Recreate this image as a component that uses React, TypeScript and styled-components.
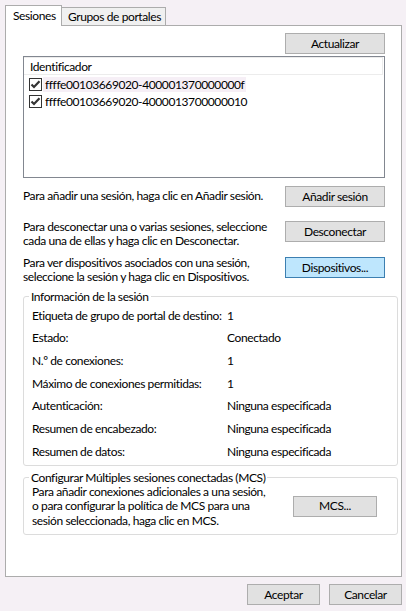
import React from "react";
import styled, { createGlobalStyle } from "styled-components";

const Global = createGlobalStyle`
  html, body { margin: 0; padding: 0; background: #f5f0f5; }
  body {
    font-family: Lato, "Liberation Sans", sans-serif;
    font-size: 12px;
    letter-spacing: -0.4px;
    color: #000;
  }
  #root { width: 406px; height: 611px; }
`;

const Dialog = styled.div`
  width: 406px;
  height: 611px;
  box-sizing: border-box;
  padding-top: 5px;
  display: flex;
  flex-direction: column;
`;

const TabStrip = styled.div`
  display: flex;
  align-items: flex-end;
  height: 20px;
  padding-left: 5px;
`;

const Tab = styled.div<{ $active?: boolean; $w: number }>`
  box-sizing: border-box;
  width: ${(p) => p.$w}px;
  height: ${(p) => (p.$active ? "21px" : "18px")};
  margin-bottom: ${(p) => (p.$active ? "-1px" : "0")};
  border: 1px solid #acacac;
  border-bottom: none;
  border-left: ${(p) => (p.$active ? "1px solid #acacac" : "none")};
  background: ${(p) => (p.$active ? "#ffffff" : "#f0f0f0")};
  position: ${(p) => (p.$active ? "relative" : "static")};
  z-index: ${(p) => (p.$active ? 1 : "auto")};
  padding: ${(p) => (p.$active ? "0 0 2px 7px" : "0 0 0 6px")};
  display: flex;
  align-items: center;
  white-space: nowrap;
`;

const Panel = styled.div`
  box-sizing: border-box;
  margin-left: 5px;
  width: 397px;
  height: 552px;
  background: #ffffff;
  border: 1px solid #acacac;
  padding: 7px 0 0 17px;
  display: flex;
  flex-direction: column;
  align-items: flex-start;
`;

const TopBar = styled.div`
  width: 362px;
  display: flex;
  justify-content: flex-end;
`;

const Button = styled.button<{ $w: number; $hot?: boolean; $mt?: number }>`
  box-sizing: border-box;
  flex: none;
  width: ${(p) => p.$w}px;
  height: 21px;
  margin: ${(p) => p.$mt ?? 0}px 0 0 0;
  padding: 0 0 1px 0;
  border: 1px solid ${(p) => (p.$hot ? "#3c7fb1" : "#adadad")};
  background: ${(p) => (p.$hot ? "#bee6fd" : "#e1e1e1")};
  font: inherit;
  letter-spacing: inherit;
  color: #000;
  display: flex;
  align-items: center;
  justify-content: center;
  white-space: nowrap;
`;

const ListBox = styled.div`
  box-sizing: border-box;
  width: 362px;
  height: 122px;
  margin-top: 2px;
  border: 1px solid #828790;
  background: #fff;
  display: flex;
  flex-direction: column;
`;

const ListHeader = styled.div`
  box-sizing: border-box;
  height: 18px;
  margin-right: 1px;
  border: 1px solid #ececec;
  border-left: none;
  padding-left: 6px;
  display: flex;
  align-items: center;
`;

const ListRows = styled.div`
  padding-top: 1px;
  display: flex;
  flex-direction: column;
`;

const ListRow = styled.div`
  height: 17px;
  padding-left: 5px;
  display: flex;
  align-items: center;
`;

const CheckBox = styled.span`
  box-sizing: border-box;
  width: 13px;
  height: 13px;
  border: 1px solid #333;
  background: #fff;
  display: flex;
  align-items: center;
  justify-content: center;
  flex: none;
`;

const RowText = styled.span<{ $sel?: boolean }>`
  margin-left: 1px;
  padding: 0 2px;
  line-height: 15px;
  background: ${(p) => (p.$sel ? "#f6eff6" : "transparent")};
  white-space: nowrap;
`;

const ActionRow = styled.div<{ $mt: number }>`
  width: 362px;
  margin-top: ${(p) => p.$mt}px;
  display: flex;
  justify-content: space-between;
  align-items: flex-start;
`;

const Hint = styled.div<{ $mt?: number }>`
  margin-top: ${(p) => p.$mt ?? 0}px;
  line-height: 14px;
  white-space: nowrap;
`;

const Group = styled.fieldset<{ $mt: number; $pb: number }>`
  box-sizing: border-box;
  width: 375px;
  margin: ${(p) => p.$mt}px 0 0 0;
  padding: 0 0 ${(p) => p.$pb}px 8px;
  border: 1px solid #dcdcdc;
  border-radius: 3px;
  min-inline-size: auto;
`;

const Legend = styled.legend`
  margin-left: -3px;
  padding: 0 2px;
  line-height: 15px;
`;

const InfoGrid = styled.div`
  display: grid;
  grid-template-columns: 195px auto;
  grid-auto-rows: 22.67px;
  align-items: center;
  white-space: nowrap;
`;

const McsBody = styled.div`
  display: flex;
  align-items: center;
  justify-content: space-between;
  padding-right: 20px;
`;

const McsText = styled.div`
  line-height: 14.5px;
  white-space: nowrap;
`;

const Footer = styled.div`
  display: flex;
  justify-content: flex-end;
  gap: 9px;
  padding: 7px 4px 0 0;
`;

const Check = () => (
  <CheckBox>
    <svg width="11" height="11" viewBox="0 0 11 11">
      <path d="M1.5 5.5 L4 8 L9.5 2.2" fill="none" stroke="#333" strokeWidth="2.2" />
    </svg>
  </CheckBox>
);

const info: [string, string][] = [
  ["Etiqueta de grupo de portal de destino:", "1"],
  ["Estado:", "Conectado"],
  ["N.º de conexiones:", "1"],
  ["Máximo de conexiones permitidas:", "1"],
  ["Autenticación:", "Ninguna especificada"],
  ["Resumen de encabezado:", "Ninguna especificada"],
  ["Resumen de datos:", "Ninguna especificada"],
];

export default function App() {
  return (
    <>
      <Global />
      <Dialog>
        <TabStrip>
          <Tab $active $w={57}>Sesiones</Tab>
          <Tab $w={104}>Grupos de portales</Tab>
        </TabStrip>
        <Panel>
          <TopBar>
            <Button $w={100}>Actualizar</Button>
          </TopBar>
          <ListBox>
            <ListHeader>Identificador</ListHeader>
            <ListRows>
              <ListRow>
                <Check />
                <RowText $sel>ffffe00103669020-400001370000000f</RowText>
              </ListRow>
              <ListRow>
                <Check />
                <RowText>ffffe00103669020-4000013700000010</RowText>
              </ListRow>
            </ListRows>
          </ListBox>
          <ActionRow $mt={8}>
            <Hint $mt={3}>Para añadir una sesión, haga clic en Añadir sesión.</Hint>
            <Button $w={100}>Añadir sesión</Button>
          </ActionRow>
          <ActionRow $mt={13}>
            <Hint>
              Para desconectar una o varias sesiones, seleccione
              <br />
              cada una de ellas y haga clic en Desconectar.
            </Hint>
            <Button $w={100} $mt={1}>Desconectar</Button>
          </ActionRow>
          <ActionRow $mt={8}>
            <Hint>
              Para ver dispositivos asociados con una sesión,
              <br />
              seleccione la sesión y haga clic en Dispositivos.
            </Hint>
            <Button $w={100} $mt={1} $hot>Dispositivos...</Button>
          </ActionRow>
          <Group $mt={5} $pb={2}>
            <Legend>Información de la sesión</Legend>
            <InfoGrid>
              {info.map(([k, v]) => (
                <React.Fragment key={k}>
                  <span>{k}</span>
                  <span>{v}</span>
                </React.Fragment>
              ))}
            </InfoGrid>
          </Group>
          <Group $mt={4} $pb={6}>
            <Legend>Configurar Múltiples sesiones conectadas (MCS)</Legend>
            <McsBody>
              <McsText>
                Para añadir conexiones adicionales a una sesión,
                <br />
                o para configurar la política de MCS para una
                <br />
                sesión seleccionada, haga clic en MCS.
              </McsText>
              <Button $w={84}>MCS...</Button>
            </McsBody>
          </Group>
        </Panel>
        <Footer>
          <Button $w={73}>Aceptar</Button>
          <Button $w={73}>Cancelar</Button>
        </Footer>
      </Dialog>
    </>
  );
}
